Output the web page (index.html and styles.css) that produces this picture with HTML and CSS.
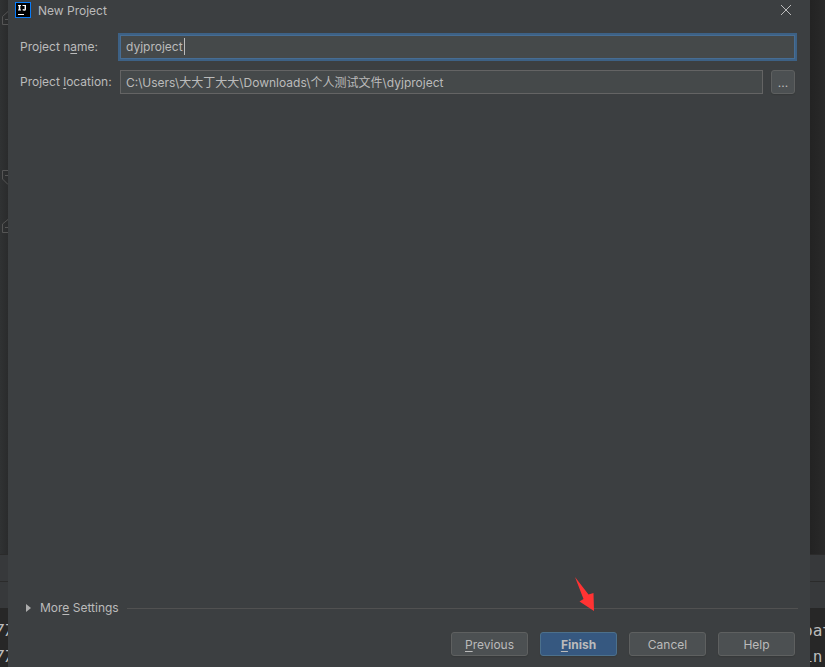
FILE: index.html
```html
<!DOCTYPE html>
<html lang="en">
<head>
    <meta charset="UTF-8">
    <meta name="viewport" content="width=device-width, initial-scale=1.0">
    <title>New Project</title>
    <link rel="stylesheet" href="styles.css">
</head>
<body>
    <div class="ide">
        <div class="edge edge-left">
            <div class="editor">
                <svg class="fold fold-first" width="6" height="16" viewBox="0 0 6 16"><path d="M6 1.5 L.5 6.5 V14.5 H6 M3 9.5 H6"/></svg>
                <svg class="fold fold-second" width="6" height="16" viewBox="0 0 6 16"><path d="M6 .5 H.5 V9 L6 14.5 M3 5.5 H6"/></svg>
                <svg class="fold fold-third" width="6" height="16" viewBox="0 0 6 16"><path d="M6 .5 L.5 5 V13.5 H6 M3 8.5 H6"/></svg>
            </div>
            <div class="toolbar"></div>
            <div class="toolbar"></div>
            <pre class="console"><span>77</span><span>77</span></pre>
        </div>

        <main class="dialog">
            <header class="title-bar">
                <svg class="logo" width="16" height="16" viewBox="0 0 16 16">
                    <path fill="#087cfa" d="M0 0h16v16H0z"/>
                    <path fill="#000" d="M1 1h14v14H1z"/>
                    <path fill="#fff" d="M3 3h3v1H5.300v3.500H6v1H3v-1h.700V4H3zM7.500 3H11v4.200q0 1.500-1.600 1.500Q8 8.700 7.300 7.900l.8-.9q1.500 1 1.500-.2V4.100H7.500zM3 12h6v1H3z"/>
                </svg>
                <h1>New Project</h1>
                <button class="close" type="button" aria-label="Close">
                    <svg width="10" height="10" viewBox="0 0 10 10"><path d="M0 0 L10 10 M10 0 L0 10"/></svg>
                </button>
            </header>

            <form class="form">
                <label for="name">Project n<u>a</u>me:</label>
                <div class="field focused">
                    <input id="name" type="text" value="dyjproject">
                    <span class="caret"></span>
                </div>
                <label for="location">Project <u>l</u>ocation:</label>
                <div class="location">
                    <input id="location" type="text" value="C:\Users\大大丁大大\Downloads\个人测试文件\dyjproject">
                    <button class="button browse" type="button">...</button>
                </div>
            </form>

            <button class="more" type="button">
                <svg width="5" height="8" viewBox="0 0 5 8"><path d="M0 0 L5 4 L0 8 Z"/></svg>
                <span>Mor<u>e</u> Settings</span>
            </button>

            <footer class="actions">
                <button class="button" type="button"><u>P</u>revious</button>
                <button class="button primary" type="button">
                    <u>F</u>inish
                    <svg class="arrow" width="20" height="34" viewBox="0 0 20 34"><path d="M0 0 L13.500 17.500 L18.500 16 L19 34 L4.500 24.500 L8.500 22 Z"/></svg>
                </button>
                <button class="button" type="button">Cancel</button>
                <button class="button" type="button">Help</button>
            </footer>
        </main>

        <div class="edge edge-right">
            <div class="editor"></div>
            <div class="toolbar"></div>
            <div class="toolbar"></div>
            <pre class="console"><span>pat</span><span>in </span></pre>
        </div>
    </div>
</body>
</html>
```
FILE: styles.css
```css
* {
    box-sizing: border-box;
}

body {
    margin: 0;
    background: #2b2b2b;
    color: #bbbbbb;
    font-family: Inter, "Noto Sans CJK SC", sans-serif;
    font-size: 12px;
    line-height: 18px;
}

button,
input {
    color: inherit;
    font: inherit;
}

u {
    text-underline-offset: 2px;
}

.ide {
    display: grid;
    grid-template-columns: 8px minmax(0, 1fr) 15px;
    min-height: 100vh;
}

/* editor showing on both sides of the dialog */
.edge {
    display: flex;
    flex-direction: column;
    overflow: hidden;
}

.edge-left {
    background: #2b2b2b;
}

.edge-right {
    background: linear-gradient(to right, #232323, #292929);
}

.editor {
    position: relative;
    flex: 1;
}

.edge-left .editor {
    background: linear-gradient(to right, #303233, #2a2b2c);
}

.fold {
    position: absolute;
    left: 2px;
    fill: none;
    stroke: #555555;
}

.fold-first {
    top: 10px;
}

.fold-second {
    top: 170px;
}

.fold-third {
    top: 219px;
}

.toolbar {
    height: 27px;
    border-top: 1px solid #2b2b2b;
    background: #37393b;
}

.console {
    height: 59px;
    margin: 0;
    padding-top: 10px;
    overflow: hidden;
    background: #272727;
    font-family: "DejaVu Sans Mono", monospace;
    font-size: 16px;
    line-height: 26px;
}

.console span {
    display: flex;
    justify-content: center;
}

.edge-left .console {
    font-style: italic;
}

.dialog {
    display: flex;
    flex-direction: column;
    min-width: 0;
    background: #3c3f41;
}

.title-bar {
    display: flex;
    align-items: center;
    height: 20px;
    padding: 0 19px 0 7px;
}

.title-bar h1 {
    flex: 1;
    margin: 0 0 0 7px;
    padding-top: 2px;
    font-size: 12px;
    font-weight: normal;
}

.logo {
    display: block;
}

.close {
    display: flex;
    padding: 0;
    border: 0;
    background: none;
}

.close svg {
    stroke: #bbbbbb;
}

.form {
    display: grid;
    grid-template-columns: 100px minmax(0, 1fr);
    row-gap: 11px;
    align-items: center;
    padding: 15px 15px 0 12px;
}

.form input {
    width: 100%;
    height: 24px;
    padding: 0 5px 2px;
    border: 1px solid #646464;
    outline: none;
    background: #45494a;
}

.field {
    position: relative;
    display: flex;
}

.form .focused input {
    border-color: #466d94;
    box-shadow: 0 0 0 2px #3d6185;
}

.caret {
    position: absolute;
    top: 3px;
    left: 64px;
    width: 1px;
    height: 17px;
    background: #bbbbbb;
}

.location {
    display: flex;
    gap: 8px;
}

.button {
    width: 77px;
    height: 24px;
    padding: 1px 0 0;
    border: 1px solid #5e6060;
    border-radius: 3px;
    background: #4c5052;
    box-shadow: 0 1px 1px #36393a;
}

.browse {
    flex: none;
    width: 24px;
}

.more {
    display: flex;
    align-items: center;
    margin: auto 12px 0 18px;
    padding: 0;
    border: 0;
    background: none;
}

.more svg {
    margin-right: 9px;
    fill: #adadad;
}

.more::after {
    content: "";
    flex: 1;
    height: 1px;
    margin-left: 8px;
    background: #515151;
}

.actions {
    display: flex;
    justify-content: flex-end;
    gap: 12px;
    padding: 15px 15px 11px;
}

.primary {
    position: relative;
    border-color: #4c708c;
    background: #365880;
    font-weight: bold;
}

.arrow {
    position: absolute;
    top: -56px;
    left: 34px;
    fill: #ff3333;
}
```
